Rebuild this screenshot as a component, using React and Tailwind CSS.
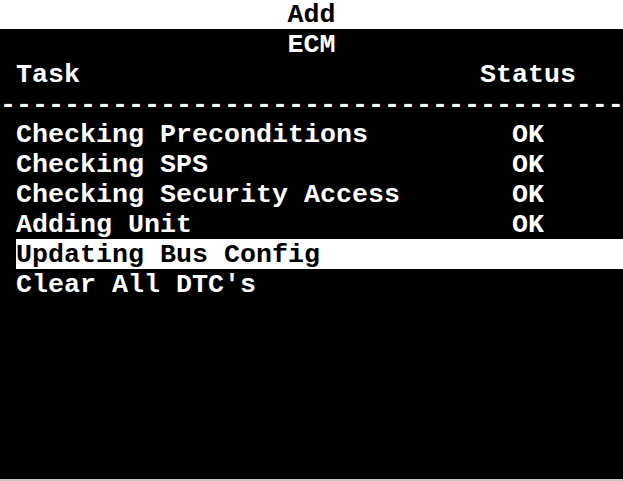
import React from 'react';

const tasks = [
    { name: 'Checking Preconditions', status: 'OK' },
    { name: 'Checking SPS', status: 'OK' },
    { name: 'Checking Security Access', status: 'OK' },
    { name: 'Adding Unit', status: 'OK' },
    { name: 'Updating Bus Config', status: '', active: true },
    { name: "Clear All DTC's", status: '' },
];

const App = () => {
    return (
        <div
            className="w-[623px] h-[481px] bg-black text-white font-bold text-[26.67px] leading-[33px] overflow-hidden flex flex-col"
            style={{ fontFamily: '"Liberation Mono", "Courier New", monospace' }}
        >
            {/* Title bar */}
            <div className="h-[29px] bg-white text-black text-center leading-[31px] shrink-0">Add</div>

            <div className="h-[30px] text-center shrink-0">ECM</div>

            {/* Header */}
            <div className="h-[30px] flex pl-4 shrink-0">
                <div className="w-[464px]">Task</div>
                <div className="w-[96px] text-center">Status</div>
            </div>

            <div className="h-[30px] whitespace-pre overflow-hidden shrink-0">
                {'-'.repeat(39)}
            </div>

            {/* Task list */}
            <div className="flex flex-col">
                {tasks.map((task) => (
                    <div
                        key={task.name}
                        className={
                            task.active
                                ? 'h-[30px] ml-4 flex bg-white text-black'
                                : 'h-[30px] ml-4 flex'
                        }
                    >
                        <div className="w-[464px] whitespace-pre">{task.name}</div>
                        <div className="w-[96px] text-center">{task.status}</div>
                    </div>
                ))}
            </div>

            <div className="flex-1" />
            <div className="h-[2px] bg-[#c4c4c4] shrink-0" />
        </div>
    );
};

export default App;
